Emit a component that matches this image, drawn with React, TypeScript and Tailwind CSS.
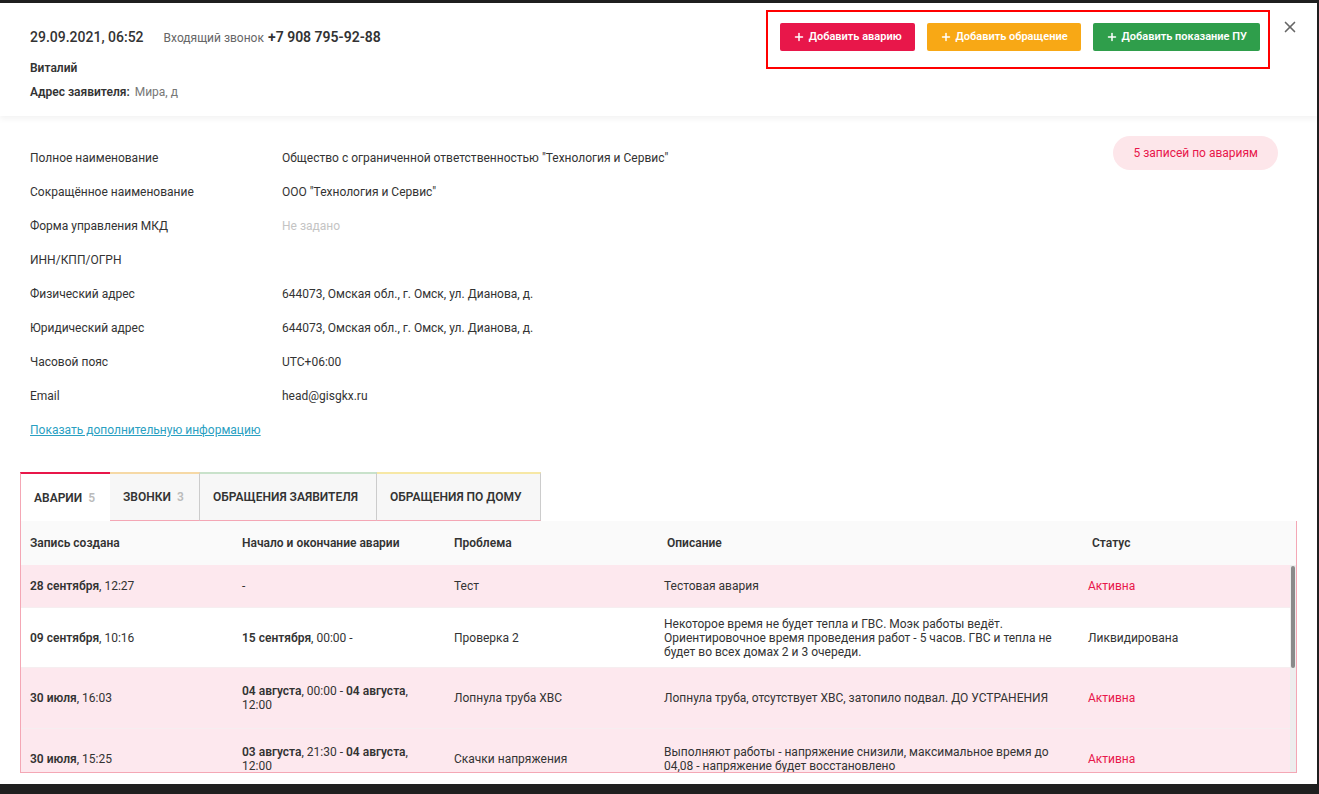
import { Plus, X } from "lucide-react";

const info = [
  { label: "Полное наименование", value: 'Общество с ограниченной ответственностью "Технология и Сервис"' },
  { label: "Сокращённое наименование", value: 'ООО "Технология и Сервис"' },
  { label: "Форма управления МКД", value: "Не задано", muted: true },
  { label: "ИНН/КПП/ОГРН", value: "" },
  { label: "Физический адрес", value: "644073, Омская обл., г. Омск, ул. Дианова, д." },
  { label: "Юридический адрес", value: "644073, Омская обл., г. Омск, ул. Дианова, д." },
  { label: "Часовой пояс", value: "UTC+06:00" },
  { label: "Email", value: "head@gisgkx.ru" },
];

type Row = {
  created: [string, string];
  period: React.ReactNode;
  problem: string;
  desc: string;
  status: string;
  active: boolean;
  h: string;
};

const rows: Row[] = [
  {
    created: ["28 сентября", ", 12:27"],
    period: "-",
    problem: "Тест",
    desc: "Тестовая авария",
    status: "Активна",
    active: true,
    h: "h-[43px]",
  },
  {
    created: ["09 сентября", ", 10:16"],
    period: (
      <>
        <b className="font-semibold">15 сентября</b>, 00:00 -
      </>
    ),
    problem: "Проверка 2",
    desc: "Некоторое время не будет тепла и ГВС. Моэк работы ведёт. Ориентировочное время проведения работ - 5 часов. ГВС и тепла не будет во всех домах 2 и 3 очереди.",
    status: "Ликвидирована",
    active: false,
    h: "h-[60px]",
  },
  {
    created: ["30 июля", ", 16:03"],
    period: (
      <>
        <b className="font-semibold">04 августа</b>, 00:00 - <b className="font-semibold">04 августа</b>, 12:00
      </>
    ),
    problem: "Лопнула труба ХВС",
    desc: "Лопнула труба, отсутствует ХВС, затопило подвал. ДО УСТРАНЕНИЯ",
    status: "Активна",
    active: true,
    h: "h-[61px]",
  },
  {
    created: ["30 июля", ", 15:25"],
    period: (
      <>
        <b className="font-semibold">03 августа</b>, 21:30 - <b className="font-semibold">04 августа</b>, 12:00
      </>
    ),
    problem: "Скачки напряжения",
    desc: "Выполняют работы - напряжение снизили, максимальное время до 04,08 - напряжение будет восстановлено",
    status: "Активна",
    active: true,
    h: "h-[61px]",
  },
];

const cols = "grid grid-cols-[212px_212px_210px_424px_1fr]";

export default function App() {
  return (
    <div className="h-screen overflow-hidden bg-[#1f1f1f] pt-[3px] font-['Roboto',sans-serif] text-[12px] text-[#333]">
      <div className="flex h-[781px] w-[1317px] flex-col bg-white">
        {/* header */}
        <div className="relative z-10 flex h-[113px] shrink-0 justify-between pl-[30px] pr-[18px] shadow-[0_3px_6px_rgba(0,0,0,0.05)]">
          <div className="pt-[24px]">
            <div className="flex items-baseline">
              <span className="text-[14px] font-medium">29.09.2021, 06:52</span>
              <span className="ml-[20px] text-[#666]">Входящий звонок</span>
              <span className="ml-[4px] text-[14px] font-semibold">+7 908 795-92-88</span>
            </div>
            <div className="mt-[11px] font-semibold">Виталий</div>
            <div className="mt-[6px]">
              <span className="font-semibold">Адрес заявителя:</span>
              <span className="ml-[5px] text-[#777]">Мира, д</span>
            </div>
          </div>
          <div className="flex items-start">
            <div className="mt-[7px] flex gap-[12px] border-2 border-[#ff0000] pb-[16px] pl-[12px] pr-[8px] pt-[11px]">
              <button className="flex h-[28px] items-center gap-[4px] rounded-[2px] bg-[#e8174a] px-[13px] text-[11px] font-semibold text-white">
                <Plus size={12} strokeWidth={3} />
                Добавить аварию
              </button>
              <button className="flex h-[28px] items-center gap-[4px] rounded-[2px] bg-[#f8a815] px-[13px] text-[11px] font-semibold text-white">
                <Plus size={12} strokeWidth={3} />
                Добавить обращение
              </button>
              <button className="flex h-[28px] items-center gap-[4px] rounded-[2px] bg-[#2f9e4b] px-[13px] text-[11px] font-semibold text-white">
                <Plus size={12} strokeWidth={3} />
                Добавить показание ПУ
              </button>
            </div>
            <X size={18} strokeWidth={2.2} className="ml-[11px] mt-[15px] text-[#666]" />
          </div>
        </div>

        {/* body */}
        <div className="flex-1 px-[20px] pt-[25px]">
          <div className="flex justify-between">
            <div className="pl-[10px]">
              {info.map((r) => (
                <div key={r.label} className="flex h-[34px] items-center">
                  <span className="w-[252px]">{r.label}</span>
                  <span className={r.muted ? "text-[#c4c4c4]" : ""}>{r.value}</span>
                </div>
              ))}
              <a href="#" className="mt-[8px] block text-[#2aa0c2] underline">
                Показать дополнительную информацию
              </a>
            </div>
            <div className="mr-[19px] mt-[-5px] flex h-[34px] items-center rounded-full bg-[#fde6ea] px-[20px] text-[12px] text-[#e8174a]">
              5 записей по авариям
            </div>
          </div>

          {/* tabs */}
          <div className="mt-[33px] flex h-[49px] text-[12px] font-semibold uppercase">
            <div className="flex w-[90px] items-center border-l border-t-2 border-l-[#f4a7b5] border-t-[#e8174a] bg-white pl-[13px]">
              Аварии <span className="ml-[6px] text-[#bbb]">5</span>
            </div>
            <div className="flex w-[90px] items-center border-r border-t-2 border-b border-r-[#ccc] border-t-[#f6d9a6] border-b-[#f4a7b5] bg-[#f7f7f7] pl-[13px]">
              Звонки <span className="ml-[6px] text-[#bbb]">3</span>
            </div>
            <div className="flex w-[177px] items-center border-r border-t-2 border-b border-r-[#ccc] border-t-[#c9e2cb] border-b-[#f4a7b5] bg-[#f7f7f7] pl-[13px]">
              Обращения заявителя
            </div>
            <div className="flex w-[164px] items-center border-r border-t-2 border-b border-r-[#ccc] border-t-[#f7e8a6] border-b-[#f4a7b5] bg-[#f7f7f7] pl-[13px]">
              Обращения по дому
            </div>
          </div>

          {/* table */}
          <div className="h-[252px] border border-t-0 border-[#f4a7b5]">
            <div className={`${cols} h-[44px] items-center bg-[#fafafa] font-semibold`}>
              <span className="pl-[9px]">Запись создана</span>
              <span className="pl-[9px]">Начало и окончание аварии</span>
              <span className="pl-[9px]">Проблема</span>
              <span className="pl-[12px]">Описание</span>
              <span className="pl-[13px]">Статус</span>
            </div>
            <div className="flex h-[207px] overflow-hidden">
              <div className="flex-1">
                {rows.map((r, i) => (
                  <div
                    key={i}
                    className={`${cols} ${r.h} shrink-0 items-center border-b border-[#f6eef0] leading-[14px] ${
                      r.active ? "bg-[#fde8ee]" : "bg-white"
                    }`}
                  >
                    <span className="pl-[9px]">
                      <b className="font-semibold">{r.created[0]}</b>
                      {r.created[1]}
                    </span>
                    <span className="pl-[9px] pr-[22px]">{r.period}</span>
                    <span className="pl-[9px]">{r.problem}</span>
                    <span className="pl-[9px] pr-[14px]">{r.desc}</span>
                    <span className={`pl-[9px] ${r.active ? "text-[#e8174a]" : ""}`}>{r.status}</span>
                  </div>
                ))}
              </div>
              <div className="w-[6px] bg-[#ededed] pt-[1px]">
                <div className="mx-auto h-[102px] w-[4px] rounded-[2px] bg-[#8a8a8a]" />
              </div>
            </div>
          </div>
        </div>
      </div>
    </div>
  );
}
